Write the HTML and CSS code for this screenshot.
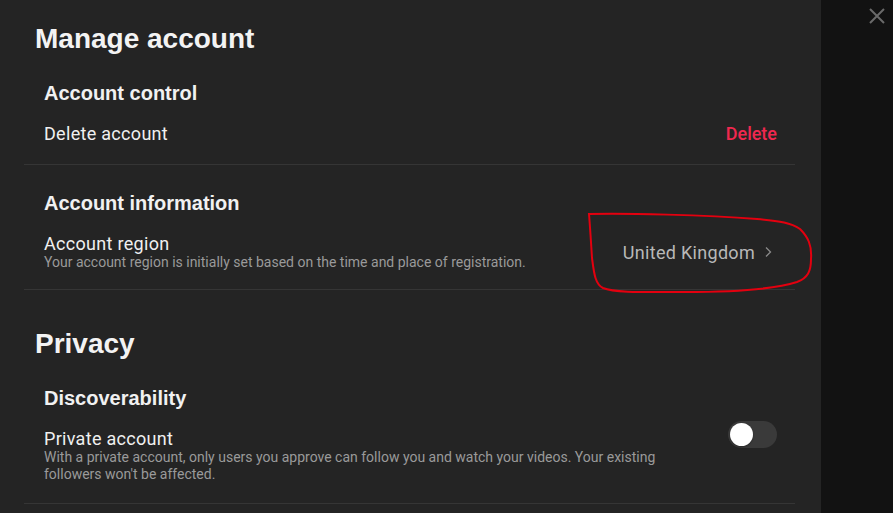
FILE: index.html
```html
<!DOCTYPE html>
<html lang="en">
<head>
<meta charset="utf-8">
<title>Settings</title>
<link rel="stylesheet" href="styles.css">
</head>
<body>
<div class="layout">
  <main class="panel">
    <h1 class="section-title first">Manage account</h1>
    <section class="group">
      <h2 class="group-title">Account control</h2>
      <div class="row">
        <div class="label">Delete account</div>
        <button class="danger">Delete</button>
      </div>
    </section>
    <section class="group compact">
      <h2 class="group-title">Account information</h2>
      <div class="row">
        <div class="text">
          <div class="label">Account region</div>
          <div class="desc">Your account region is initially set based on the time and place of registration.</div>
        </div>
        <div class="value">United Kingdom
          <svg class="chev" width="9" height="12" viewBox="0 0 9 12"><path d="M2 1.5 L6.5 6 L2 10.5" fill="none" stroke="currentColor" stroke-width="1.3"/></svg>
        </div>
        <svg class="scribble" width="232" height="90" viewBox="0 0 232 90"><path d="M4 3 C40 2 120 4 172 8 C196 10 206 12 215 18 C223 26 227 34 226 48 C226 60 223 67 212 71 C190 78 150 81 100 81 C60 81 30 82 18 77 C10 73 9 62 7 47 C6 31 5 15 4 3 Z" fill="none" stroke="#e3000f" stroke-width="2"/></svg>
      </div>
    </section>
    <h1 class="section-title">Privacy</h1>
    <section class="group">
      <h2 class="group-title">Discoverability</h2>
      <div class="row top">
        <div class="text">
          <div class="label">Private account</div>
          <div class="desc narrow">With a private account, only users you approve can follow you and watch your videos. Your existing followers won't be affected.</div>
        </div>
        <div class="toggle"><span class="knob"></span></div>
      </div>
    </section>
  </main>
  <aside class="side">
    <svg class="close" width="16" height="16" viewBox="0 0 16 16"><path d="M1 1 L15 15 M15 1 L1 15" stroke="#6a6a6a" stroke-width="2"/></svg>
  </aside>
</div>
</body>
</html>
```
FILE: styles.css
```css
* { box-sizing: border-box; }
html, body { margin: 0; padding: 0; height: 100%; }
body {
  background: #121212;
  font-family: Roboto, "Liberation Sans", Arial, sans-serif;
  color: #f1f1f1;
  overflow: hidden;
}
.layout { display: flex; height: 513px; }
.panel {
  width: 821px;
  background: #242424;
  padding: 23px 26px 0 24px;
}
.side { flex: 1; display: flex; justify-content: flex-end; align-items: flex-start; padding: 8px 8px 0 0; }
.section-title {
  margin: 38px 0 0;
  padding-left: 11px;
  font-family: "Liberation Sans", Arial, sans-serif;
  font-weight: 700;
  font-size: 28px;
  line-height: 32px;
  color: #f3f3f3;
}
.section-title.first { margin-top: 0; }
.group {
  border-bottom: 1px solid #353535;
  padding: 26px 18px 20px 20px;
}
.group.compact { padding-bottom: 18px; }
.group-title {
  margin: 0;
  font-family: "Liberation Sans", Arial, sans-serif;
  font-size: 20px;
  font-weight: 700;
  line-height: 24px;
  color: #f1f1f1;
}
.row {
  margin-top: 18px;
  display: flex;
  justify-content: space-between;
  align-items: center;
  position: relative;
}
.row.top { align-items: flex-start; }
.label { font-size: 18px; line-height: 21px; font-weight: 400; letter-spacing: 0.3px; color: #f0f0f0; }
.desc { font-size: 14px; line-height: 17px; color: #9a9a9a; }
.desc.narrow { width: 640px; }
.danger {
  background: none; border: 0; padding: 0;
  font-family: inherit; font-size: 18px; line-height: 21px;
  color: #f0284f; font-weight: 500;
}
.value {
  display: flex; align-items: center; gap: 9px;
  font-size: 18px; line-height: 21px; font-weight: 400; letter-spacing: 0.3px; color: #b8b8b8;
  margin-right: 4px;
}
.chev { color: #8a8a8a; }
.scribble { position: absolute; right: -40px; top: -22px; }
.toggle {
  width: 49px; height: 27px; border-radius: 14px;
  background: #3a3a3a;
  margin-top: -7px;
  padding: 2px;
}
.knob {
  display: block; width: 23px; height: 23px; border-radius: 50%;
  background: #ffffff;
  box-shadow: 0 1px 2px rgba(0,0,0,.3);
}
.close { display: block; }
```
